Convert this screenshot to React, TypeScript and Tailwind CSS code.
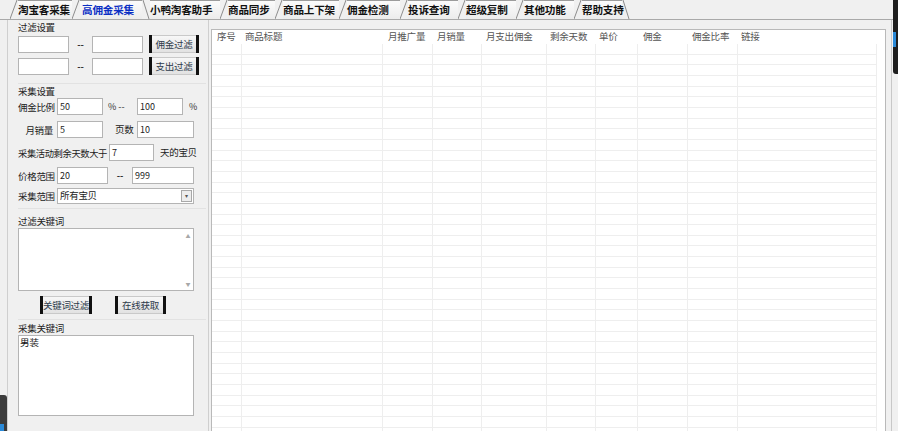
import React from 'react';

const tabs = [
  { label: '淘宝客采集', w: 'w-[54px]', lead: '/' },
  { label: '高佣金采集', w: 'w-[62px]', lead: '/', active: true },
  { label: '小鸭淘客助手', w: 'w-[70px]', lead: '\\' },
  { label: '商品同步', w: 'w-[47px]', lead: '/' },
  { label: '商品上下架', w: 'w-[56px]', lead: '/' },
  { label: '佣金检测', w: 'w-[53px]', lead: '/' },
  { label: '投诉查询', w: 'w-[50px]', lead: '/' },
  { label: '超级复制', w: 'w-[50px]', lead: '/' },
  { label: '其他功能', w: 'w-[50px]', lead: '/' },
  { label: '帮助支持', w: 'w-[40px]', lead: '/' },
];

const headerCols = [
  { label: '序号', w: 'w-[28px]' },
  { label: '商品标题', w: 'w-[143px]' },
  { label: '月推广量', w: 'w-[49px]' },
  { label: '月销量', w: 'w-[49px]' },
  { label: '月支出佣金', w: 'w-[64px]' },
  { label: '剩余天数', w: 'w-[49px]' },
  { label: '单价', w: 'w-[44px]' },
  { label: '佣金', w: 'w-[49px]' },
  { label: '佣金比率', w: 'w-[49px]' },
  { label: '链接', w: 'flex-1' },
];

const dataCols = ['w-[30px]', 'w-[141px]', 'w-[50px]', 'w-[49px]', 'w-[65px]', 'w-[49px]', 'w-[42px]', 'w-[50px]', 'w-[50px]', 'w-[139px]'];

const Slash = ({ back }: { back?: boolean }) => (
  <svg width="8" height="19" className="shrink-0">
    {back ? (
      <line x1="1" y1="0" x2="7" y2="19" stroke="#8c8c8c" strokeWidth="1" />
    ) : (
      <line x1="0" y1="19" x2="7" y2="0" stroke="#8c8c8c" strokeWidth="1" />
    )}
  </svg>
);

const Input = ({ w, value }: { w: string; value?: string }) => (
  <div className={`${w} h-[17px] bg-white border border-[#b4b4b4] flex items-center pl-[2px] text-[9px] text-[#222] shrink-0`}>
    {value}
  </div>
);

const Btn = ({ w, label }: { w: string; label: string }) => (
  <div className={`${w} h-[18px] flex shrink-0`}>
    <div className="w-[3px] bg-[#111]" />
    <div className="flex-1 bg-gradient-to-b from-[#f7f7f7] to-[#e2e2e2] border-y border-[#c9c9c9] flex items-center justify-center text-[9.5px] tracking-[-0.3px] whitespace-nowrap text-[#2d3a4a]">
      {label}
    </div>
    <div className="w-[3px] bg-[#111]" />
  </div>
);

const Label = ({ w, text, right }: { w: string; text: string; right?: boolean }) => (
  <div className={`${w} shrink-0 text-[9.5px] tracking-[-0.3px] text-[#222] leading-[12px] whitespace-nowrap ${right ? 'text-right pr-[4px]' : ''}`}>{text}</div>
);

const Dash = ({ w }: { w: string }) => (
  <div className={`${w} shrink-0 text-center text-[9px] font-bold text-[#333] leading-none`}>--</div>
);

const ScrollArrows = () => (
  <div className="w-[10px] flex flex-col justify-between items-center py-[4px] text-[5px] text-[#a8a8a8] leading-none">
    <span>▲</span>
    <span>▼</span>
  </div>
);

export default function App() {
  const rows = Array.from({ length: 37 });
  return (
    <div className="relative w-[898px] h-[431px] overflow-hidden bg-[#f0f0f0] font-['Noto_Sans_CJK_SC',sans-serif]">
      {/* tab strip */}
      <div className="h-[20px] flex items-end border-b border-[#a9a9a9] pl-[10px]">
        {tabs.map((t) => (
          <div key={t.label} className="flex h-[19px]">
            <Slash back={t.lead === '\\'} />
            <div
              className={`${t.w} h-[19px] bg-gradient-to-b from-[#fbfbfb] to-[#ececec] border-t border-[#9c9c9c] flex items-center text-[10.6px] tracking-[-0.2px] font-bold leading-none whitespace-nowrap ${
                t.active ? 'text-[#0a2fc4] pl-[2px]' : 'text-[#111]'
              }`}
            >
              {t.label}
            </div>
          </div>
        ))}
        <Slash back />
      </div>

      <div className="flex h-[411px]">
        <div className="w-[7px]" />
        {/* left panel */}
        <div className="w-[202px] border-l border-r border-[#cfcfcf] pl-[10px] pr-[2px] flex flex-col">
          {/* 过滤设置 */}
          <div className="pt-[1px] pb-[8px] border-b border-[#e2e2e2]">
            <Label w="w-[60px]" text="过滤设置" />
            <div className="flex items-center mt-[2px]">
              <Input w="w-[51px]" />
              <Dash w="w-[23px]" />
              <Input w="w-[51px]" />
              <div className="w-[6px]" />
              <Btn w="w-[50px]" label="佣金过滤" />
            </div>
            <div className="flex items-center mt-[4px]">
              <Input w="w-[51px]" />
              <Dash w="w-[23px]" />
              <Input w="w-[51px]" />
              <div className="w-[6px]" />
              <Btn w="w-[50px]" label="支出过滤" />
            </div>
          </div>

          {/* 采集设置 */}
          <div className="pt-[1px] pb-[4px] border-b border-[#e2e2e2]">
            <Label w="w-[60px]" text="采集设置" />
            <div className="flex items-center mt-[1px]">
              <Label w="w-[39px]" text="佣金比例" />
              <Input w="w-[46px]" value="50" />
              <div className="w-[34px] pl-[5px] text-[9px] text-[#333] whitespace-nowrap">% --</div>
              <Input w="w-[46px]" value="100" />
              <div className="pl-[6px] text-[9px] text-[#333]">%</div>
            </div>
            <div className="flex items-center mt-[6px]">
              <Label w="w-[39px]" text="月销量" right />
              <Input w="w-[46px]" value="5" />
              <div className="w-[34px] pl-[12px] text-[9.5px] tracking-[-0.3px] whitespace-nowrap text-[#222]">页数</div>
              <Input w="w-[57px]" value="10" />
            </div>
            <div className="flex items-center mt-[6px]">
              <div className="w-[91px] shrink-0 text-[9.3px] tracking-[-0.4px] text-[#222] leading-[12px] whitespace-nowrap">采集活动剩余天数大于</div>
              <Input w="w-[45px]" value="7" />
              <div className="pl-[6px] text-[9.5px] tracking-[-0.3px] whitespace-nowrap text-[#222]">天的宝贝</div>
            </div>
            <div className="flex items-center mt-[6px]">
              <Label w="w-[39px]" text="价格范围" />
              <Input w="w-[51px]" value="20" />
              <Dash w="w-[24px]" />
              <Input w="w-[62px]" value="999" />
            </div>
            <div className="flex items-center mt-[4px]">
              <Label w="w-[39px]" text="采集范围" />
              <div className="w-[137px] h-[16px] bg-white border border-[#b4b4b4] flex items-center justify-between pl-[2px] pr-[1px]">
                <span className="text-[9.5px] tracking-[-0.3px] text-[#222] leading-none">所有宝贝</span>
                <div className="w-[11px] h-[12px] border border-[#a8a8a8] bg-[#ededed] flex items-center justify-center text-[6px] text-[#555] leading-none">
                  ▾
                </div>
              </div>
            </div>
          </div>

          {/* 过滤关键词 */}
          <div className="pt-[6px] pb-[5px] border-b border-[#e2e2e2]">
            <Label w="w-[60px]" text="过滤关键词" />
            <div className="mt-[1px] w-[176px] h-[63px] bg-white border border-[#b4b4b4] flex justify-end">
              <ScrollArrows />
            </div>
            <div className="flex mt-[5px] pl-[22px] gap-[23px]">
              <Btn w="w-[52px]" label="关键词过滤" />
              <Btn w="w-[51px]" label="在线获取" />
            </div>
          </div>

          {/* 采集关键词 */}
          <div className="pt-[2px]">
            <Label w="w-[60px]" text="采集关键词" />
            <div className="mt-[1px] w-[176px] h-[81px] bg-white border border-[#b4b4b4] pl-[1px] text-[9.5px] leading-[12px] text-[#111]">
              男装
            </div>
          </div>
        </div>

        {/* grid */}
        <div className="w-[2px]" />
        <div className="w-[675px] mt-[9px] bg-white border-l border-t border-r border-[#b9b9b9] flex flex-col overflow-hidden">
          <div className="h-[14px] flex items-center pl-[5px] shrink-0">
            {headerCols.map((c) => (
              <div key={c.label} className={`${c.w} shrink-0 text-[9.5px] tracking-[-0.2px] leading-none text-[#555] whitespace-nowrap`}>
                {c.label}
              </div>
            ))}
          </div>
          {rows.map((_, i) => (
            <div key={i} className="h-[10.67px] flex shrink-0">
              {dataCols.map((w, j) => (
                <div key={j} className={`${w} shrink-0 border-r border-b border-[#eeeeee]`} />
              ))}
            </div>
          ))}
        </div>
        <div className="w-[5px]" />
        <div className="w-[1px] bg-[#c8c8c8]" />
      </div>

      {/* desktop behind the window */}
      <div className="absolute right-0 top-0 w-[5px] h-[74px] bg-[#1e1e1e] rounded-bl-[3px]">
        <div className="mt-[32px] w-[3px] h-[15px] bg-[#2b8ad8]" />
      </div>
      <div className="absolute left-0 bottom-0 w-[7px] h-[36px] bg-[#3c3c3c] rounded-tr-[3px]">
        <div className="mt-[29px] w-[4px] h-[7px] bg-[#2b8ad8]" />
      </div>
    </div>
  );
}
